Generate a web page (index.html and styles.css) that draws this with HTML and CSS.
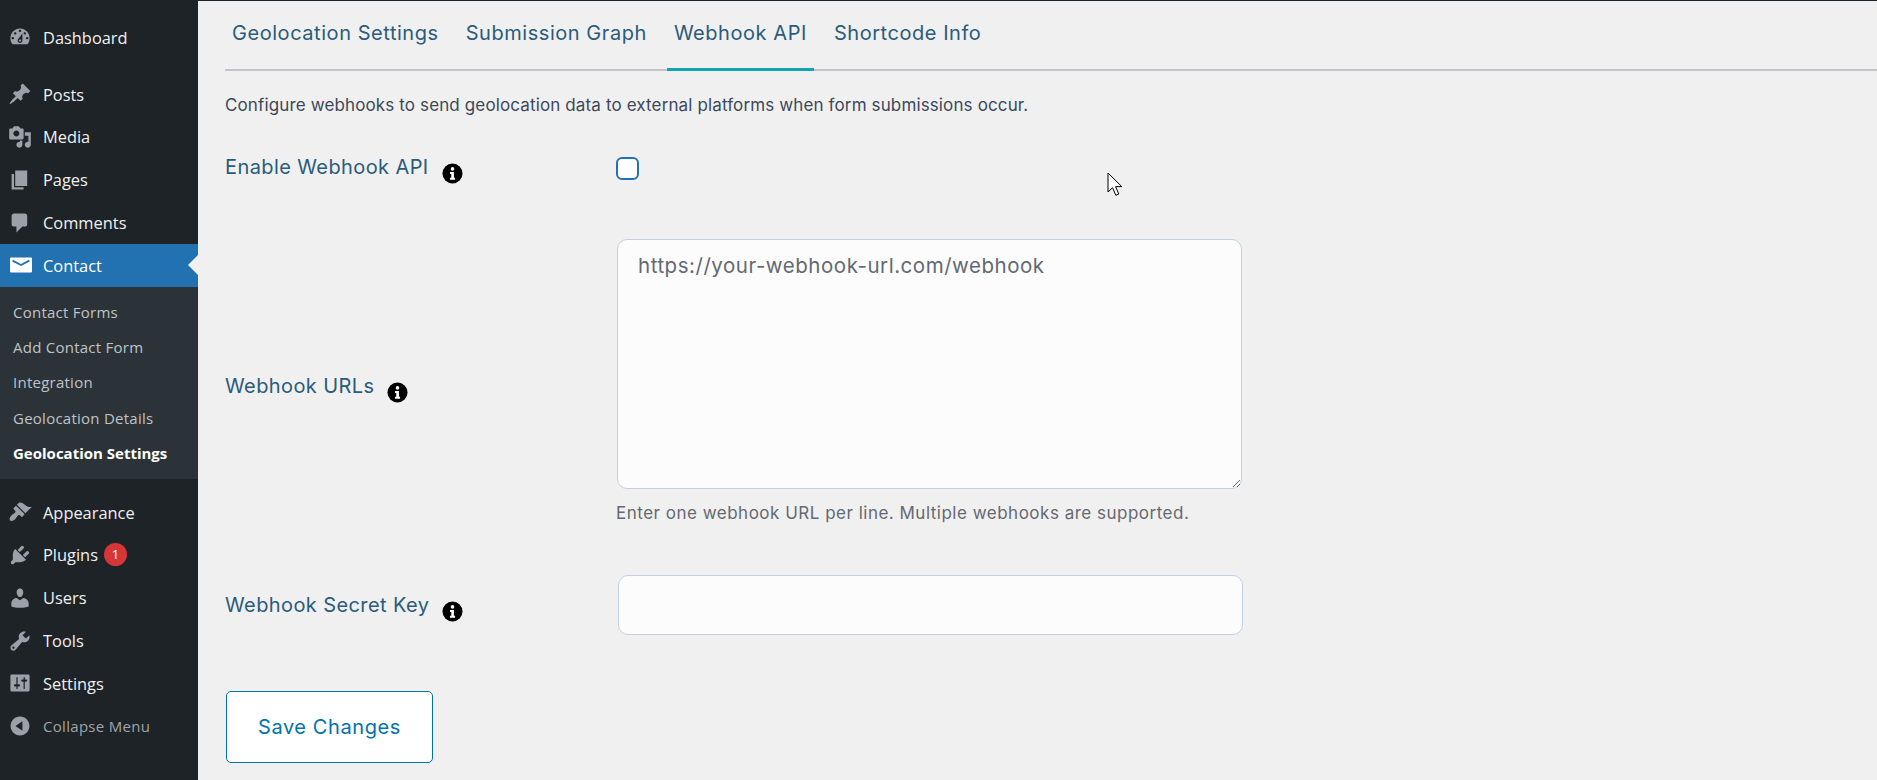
FILE: index.html
```html
<!DOCTYPE html>
<html lang="en">

<head>
    <meta charset="UTF-8">
    <title>Geolocation Settings</title>
    <link rel="stylesheet" href="styles.css">
</head>

<body>
    <!-- admin sidebar -->
    <nav class="sidebar">
        <a class="menu-item"><svg class="menu-icon" viewBox="0 0 20 20"><path fill-rule="evenodd" d="M3.76 16h12.48c1.1-1.37 1.76-3.11 1.76-5 0-4.42-3.58-8-8-8s-8 3.58-8 8c0 1.89.66 3.63 1.76 5zM10 4c.55 0 1 .45 1 1s-.45 1-1 1-1-.45-1-1 .45-1 1-1zM6 6c.55 0 1 .45 1 1s-.45 1-1 1-1-.45-1-1 .45-1 1-1zm8 0c.55 0 1 .45 1 1s-.45 1-1 1-1-.45-1-1 .45-1 1-1zm-5.37 5.55L12 7v6c0 1.1-.9 2-2 2s-2-.9-2-2c0-.57.24-1.08.63-1.45zM4 10c.55 0 1 .45 1 1s-.45 1-1 1-1-.45-1-1 .45-1 1-1zm12 0c.55 0 1 .45 1 1s-.45 1-1 1-1-.45-1-1 .45-1 1-1zm-5 3c0-.55-.45-1-1-1s-1 .45-1 1 .45 1 1 1 1-.45 1-1z"/></svg>Dashboard</a>
        <div class="menu-gap"></div>
        <a class="menu-item"><svg class="menu-icon" viewBox="0 0 20 20"><path d="M10.44 3.02l1.82-1.82 6.36 6.35-1.83 1.82c-1.05-.68-2.48-.57-3.41.36l-.75.75c-.92.93-1.04 2.35-.35 3.41l-1.83 1.82-2.41-2.41-2.8 2.79c-.42.42-3.38 2.71-3.8 2.29s1.86-3.39 2.28-3.81l2.79-2.79L4.1 9.36l1.83-1.82c1.05.69 2.48.57 3.4-.36l.75-.75c.93-.92 1.05-2.35.36-3.41z"/></svg>Posts</a>
        <a class="menu-item"><svg class="menu-icon" viewBox="0 0 20 20"><path fill-rule="evenodd" d="M13 11V4c0-.55-.45-1-1-1h-1.67L9 1H5L3.67 3H2c-.55 0-1 .45-1 1v7c0 .55.45 1 1 1h10c.55 0 1-.45 1-1zM7 4.5c1.38 0 2.5 1.12 2.5 2.5S8.38 9.5 7 9.5 4.5 8.38 4.5 7 5.62 4.5 7 4.5zM14 6h5v10.5c0 1.38-1.12 2.5-2.5 2.5S14 17.88 14 16.5s1.12-2.5 2.5-2.5c.17 0 .34.02.5.05V9h-3V6zm-4 8.05V13h2v3.5c0 1.38-1.12 2.5-2.5 2.5S7 17.88 7 16.5 8.12 14 9.5 14c.17 0 .34.02.5.05z"/></svg>Media</a>
        <a class="menu-item"><svg class="menu-icon" viewBox="0 0 20 20"><path d="M6 15V2h10v13H6zm-1 1h8v2H3V5h2v11z"/></svg>Pages</a>
        <a class="menu-item"><svg class="menu-icon" viewBox="0 0 20 20"><path d="M5 2h9c1.1 0 2 .9 2 2v7c0 1.1-.9 2-2 2h-2l-5 5v-5H5c-1.1 0-2-.9-2-2V4c0-1.1.9-2 2-2z"/></svg>Comments</a>
        <a class="menu-item active"><svg class="menu-icon" viewBox="0 0 20 20"><rect x="1.7" y="3.8" width="18.3" height="12.5" rx="0.8"/><polyline class="mail-flap" points="3.8,6.4 10.8,10 17.8,6.4"/></svg>Contact</a>
        <!-- contact submenu -->
        <div class="submenu">
            <a class="sub-item">Contact Forms</a>
            <a class="sub-item">Add Contact Form</a>
            <a class="sub-item">Integration</a>
            <a class="sub-item">Geolocation Details</a>
            <a class="sub-item current">Geolocation Settings</a>
        </div>
        <a class="menu-item"><svg class="menu-icon" viewBox="0 0 20 20"><path d="M14.48 11.06L7.41 3.99l1.5-1.5c.5-.56 2.3-.47 3.51.32 1.21.8 1.43 1.28 2.91 2.1 1.18.64 2.45 1.26 4.45.85zm-.71.71L6.7 4.7 4.93 6.47c-.39.39-.39 1.02 0 1.41l1.06 1.06c.39.39.39 1.03 0 1.42-.6.6-1.43 1.11-2.21 1.69-.35.26-.7.53-1.01.84-1.43 1.43-1.81 3.34-1.02 4.13.79.79 2.7.41 4.13-1.02.31-.31.58-.66.84-1.01.58-.78 1.09-1.61 1.69-2.21.39-.39 1.03-.39 1.42 0l1.06 1.06c.39.39 1.02.39 1.41 0z"/></svg>Appearance</a>
        <a class="menu-item"><svg class="menu-icon" viewBox="0 0 20 20"><path d="M13.11 4.36L9.87 7.6 8 5.73l3.24-3.24c.35-.34 1.05-.2 1.56.32.52.51.66 1.21.31 1.55zm-8 1.77l.91-1.12 9.01 9.01-1.19.84c-.71.71-2.63 1.16-3.82 1.16H6.14L4.9 17.26c-.59.59-1.54.59-2.12 0-.59-.58-.59-1.53 0-2.12l1.24-1.24v-3.88c0-1.13.4-3.19 1.09-3.89zm7.26 3.97l3.24-3.24c.34-.35 1.04-.21 1.55.31.52.51.66 1.21.31 1.55l-3.24 3.25z"/></svg>Plugins<span class="badge">1</span></a>
        <a class="menu-item"><svg class="menu-icon" viewBox="0 0 20 20"><path d="M10 9.25c-2.27 0-2.73-3.44-2.73-3.44C7 4.02 7.82 2 9.97 2c2.16 0 2.98 2.02 2.71 3.81 0 0-.41 3.44-2.68 3.44zm0 2.57L12.72 10c2.39 0 4.52 2.33 4.52 4.53v2.49s-3.65 1.13-7.24 1.13c-3.65 0-7.24-1.13-7.24-1.13v-2.49c0-2.25 1.94-4.48 4.47-4.48z"/></svg>Users</a>
        <a class="menu-item"><svg class="menu-icon" viewBox="0 0 20 20"><path fill-rule="evenodd" d="M16.68 9.77c-1.34 1.34-3.3 1.67-4.95.99l-5.41 6.52c-.99.99-2.59.99-3.58 0s-.99-2.59 0-3.57l6.52-5.42c-.68-1.65-.35-3.61.99-4.95 1.28-1.28 3.12-1.62 4.72-1.06l-2.89 2.89 2.82 2.82 2.86-2.87c.53 1.58.18 3.39-1.08 4.65zM3.81 16.21c.4.39 1.04.39 1.43 0 .4-.4.4-1.04 0-1.43-.39-.4-1.03-.4-1.43 0-.39.39-.39 1.03 0 1.43z"/></svg>Tools</a>
        <a class="menu-item"><svg class="menu-icon" viewBox="0 0 20 20"><path fill-rule="evenodd" d="M18 16V4c0-.55-.45-1-1-1H3c-.55 0-1 .45-1 1v12c0 .55.45 1 1 1h14c.55 0 1-.45 1-1zM8 11h1c.55 0 1 .45 1 1s-.45 1-1 1H8v1.5c0 .28-.22.5-.5.5s-.5-.22-.5-.5V13H6c-.55 0-1-.45-1-1s.45-1 1-1h1V5.5c0-.28.22-.5.5-.5s.5.22.5.5V11zm5-2h-1c-.55 0-1-.45-1-1s.45-1 1-1h1V5.5c0-.28.22-.5.5-.5s.5.22.5.5V7h1c.55 0 1 .45 1 1s-.45 1-1 1h-1v5.5c0 .28-.22.5-.5.5s-.5-.22-.5-.5V9z"/></svg>Settings</a>
        <a class="menu-item collapse"><svg class="menu-icon" viewBox="0 0 20 20"><path fill-rule="evenodd" d="M10 2.16c4.33 0 7.84 3.51 7.84 7.84s-3.51 7.84-7.84 7.84S2.16 14.33 2.16 10 5.71 2.16 10 2.16zm2 11.72V6.12L6.18 9.97z"/></svg>Collapse Menu</a>
    </nav>

    <!-- main content -->
    <main class="content">
        <div class="tabs">
            <a class="tab">Geolocation Settings</a>
            <a class="tab">Submission Graph</a>
            <a class="tab tab-active">Webhook API</a>
            <a class="tab">Shortcode Info</a>
        </div>

        <p class="intro">Configure webhooks to send geolocation data to external platforms when form submissions occur.</p>

        <div class="field field-enable">
            <label class="field-label" for="enableWebhook">Enable Webhook API
                <svg class="info" viewBox="0 0 22 22"><circle cx="11" cy="11" r="10.5"/><circle class="info-mark" cx="11" cy="6.2" r="1.9"/><path class="info-mark" d="M8.4 9.4h4.1v6.1h1.2v2H8.4v-2h1.3v-4.1H8.4z"/></svg>
            </label>
            <input class="check" id="enableWebhook" type="checkbox">
        </div>

        <div class="field field-urls">
            <label class="field-label" for="webhookUrls">Webhook URLs
                <svg class="info" viewBox="0 0 22 22"><circle cx="11" cy="11" r="10.5"/><circle class="info-mark" cx="11" cy="6.2" r="1.9"/><path class="info-mark" d="M8.4 9.4h4.1v6.1h1.2v2H8.4v-2h1.3v-4.1H8.4z"/></svg>
            </label>
            <div>
                <textarea class="url-box" id="webhookUrls" placeholder="https://your-webhook-url.com/webhook"></textarea>
                <p class="hint">Enter one webhook URL per line. Multiple webhooks are supported.</p>
            </div>
        </div>

        <div class="field field-secret">
            <label class="field-label" for="webhookSecret">Webhook Secret Key
                <svg class="info" viewBox="0 0 22 22"><circle cx="11" cy="11" r="10.5"/><circle class="info-mark" cx="11" cy="6.2" r="1.9"/><path class="info-mark" d="M8.4 9.4h4.1v6.1h1.2v2H8.4v-2h1.3v-4.1H8.4z"/></svg>
            </label>
            <input class="secret-box" id="webhookSecret" type="text">
        </div>

        <button class="save" type="button">Save Changes</button>
    </main>

    <!-- mouse pointer from the screenshot -->
    <svg class="pointer" viewBox="0 0 16 25"><path d="M1 1v19l4.6-4.3 3.2 7.6 3-1.3-3.2-7.4h6.2z"/></svg>
</body>

</html>
```

FILE: styles.css
```css
/* page */
html,
body {
    height: 100%;
}

body {
    margin: 0;
    display: flex;
    height: 780px;
    overflow: hidden;
    background-color: #f0f0f1;
    border-top: 1px solid #1d2327;
    box-sizing: border-box;
    font-family: Inter, "Noto Sans", sans-serif;
    position: relative;
}

/* admin sidebar */
.sidebar {
    width: 198px;
    flex-shrink: 0;
    padding-top: 15px;
    background-color: #1d2327;
    font-family: "Open Sans", "Noto Sans", sans-serif;
}

.menu-item {
    display: flex;
    align-items: center;
    height: 42.8px;
    padding-left: 8px;
    color: #f0f0f1;
    font-size: 16.4px;
    position: relative;
}

.menu-gap {
    height: 14px;
}

.menu-icon {
    width: 24px;
    height: 24px;
    margin-right: 11px;
    flex-shrink: 0;
    fill: #9ca1a7;
}

.menu-item.active {
    background-color: #2271b1;
    color: #ffffff;
}

.menu-item.active .menu-icon {
    fill: #ffffff;
}

.mail-flap {
    fill: none !important;
    stroke: #2271b1;
    stroke-width: 1.6;
}

/* small notch that points at the content */
.menu-item.active::after {
    content: "";
    position: absolute;
    right: 0;
    top: 50%;
    margin-top: -10px;
    border: 10px solid transparent;
    border-left-width: 0;
    border-right-color: #f0f0f1;
}

.collapse {
    color: #a0a5aa;
    font-size: 15px;
    letter-spacing: 0.3px;
}

.badge {
    width: 23px;
    height: 23px;
    margin-left: 6px;
    border-radius: 50%;
    background-color: #d63638;
    color: #ffffff;
    font-size: 13px;
    line-height: 23px;
    text-align: center;
}

.submenu {
    height: 192px;
    margin-bottom: 12px;
    padding: 8px 0;
    box-sizing: border-box;
    background-color: #2c3338;
}

.sub-item {
    display: block;
    height: 35.3px;
    padding-left: 13px;
    color: #bfc3c7;
    font-size: 15px;
    line-height: 35.3px;
    letter-spacing: 0.25px;
}

.sub-item.current {
    color: #ffffff;
    font-weight: 700;
    letter-spacing: 0;
}

/* main content */
.content {
    flex: 1;
    padding-left: 27px;
}

.tabs {
    display: flex;
    gap: 13px;
    height: 70px;
    box-sizing: border-box;
    border-bottom: 2px solid #c3c4c7;
}

.tab {
    height: 70px;
    box-sizing: border-box;
    padding: 19px 7px 0;
    color: #2b5b7a;
    font-size: 20px;
    line-height: 26px;
    letter-spacing: 0.55px;
}

.tab-active {
    border-bottom: 3px solid #13a4ad;
}

.intro {
    margin: 23px 0 0;
    color: #3c4858;
    font-size: 17px;
    line-height: 22px;
    letter-spacing: 0.13px;
}

.field {
    display: flex;
    align-items: center;
}

.field-label {
    width: 391px;
    flex-shrink: 0;
    color: #2b5b7a;
    font-size: 20px;
    line-height: 26px;
    letter-spacing: 0.4px;
}

.info {
    width: 21px;
    height: 21px;
    margin-left: 7px;
    vertical-align: -10px;
    fill: #000000;
}

.info-mark {
    fill: #ffffff;
}

.field-enable {
    margin-top: 38px;
}

.field-urls {
    margin-top: 55px;
}

/* label of the tall row sits a little under the middle */
.field-urls .field-label {
    margin-top: 11px;
}

.field-secret {
    margin-top: 50px;
}

.field-secret .field-label {
    margin-top: 3px;
}

.check {
    appearance: none;
    width: 23px;
    height: 23px;
    margin: 0 0 2px;
    border: 2px solid #2271b1;
    border-radius: 6px;
    background-color: #ffffff;
}

.url-box {
    display: block;
    width: 625px;
    height: 250px;
    margin-left: 1px;
    padding: 12px 20px;
    box-sizing: border-box;
    border: 1px solid #c3d0e3;
    border-radius: 10px;
    background-color: #fcfcfd;
    font-family: inherit;
    font-size: 20.5px;
    line-height: 28px;
    letter-spacing: 0.53px;
}

.url-box::placeholder {
    color: #646970;
    opacity: 1;
}

.hint {
    margin: 13px 0 0;
    color: #646970;
    font-size: 17px;
    line-height: 23px;
    letter-spacing: 0.5px;
}

.secret-box {
    display: block;
    width: 625px;
    height: 60px;
    margin-left: 2px;
    box-sizing: border-box;
    border: 1px solid #c3d0e3;
    border-radius: 10px;
    background-color: #fcfcfd;
}

.save {
    display: block;
    width: 207px;
    height: 72px;
    margin: 56px 0 0 1px;
    border: 1px solid #0073aa;
    border-radius: 5px;
    background-color: #ffffff;
    color: #0073aa;
    font-family: inherit;
    font-size: 20px;
    letter-spacing: 0.6px;
}

/* mouse pointer */
.pointer {
    position: absolute;
    left: 1107px;
    top: 171px;
    width: 16px;
    height: 25px;
    fill: #ffffff;
    stroke: #000000;
    stroke-width: 1;
}
```
